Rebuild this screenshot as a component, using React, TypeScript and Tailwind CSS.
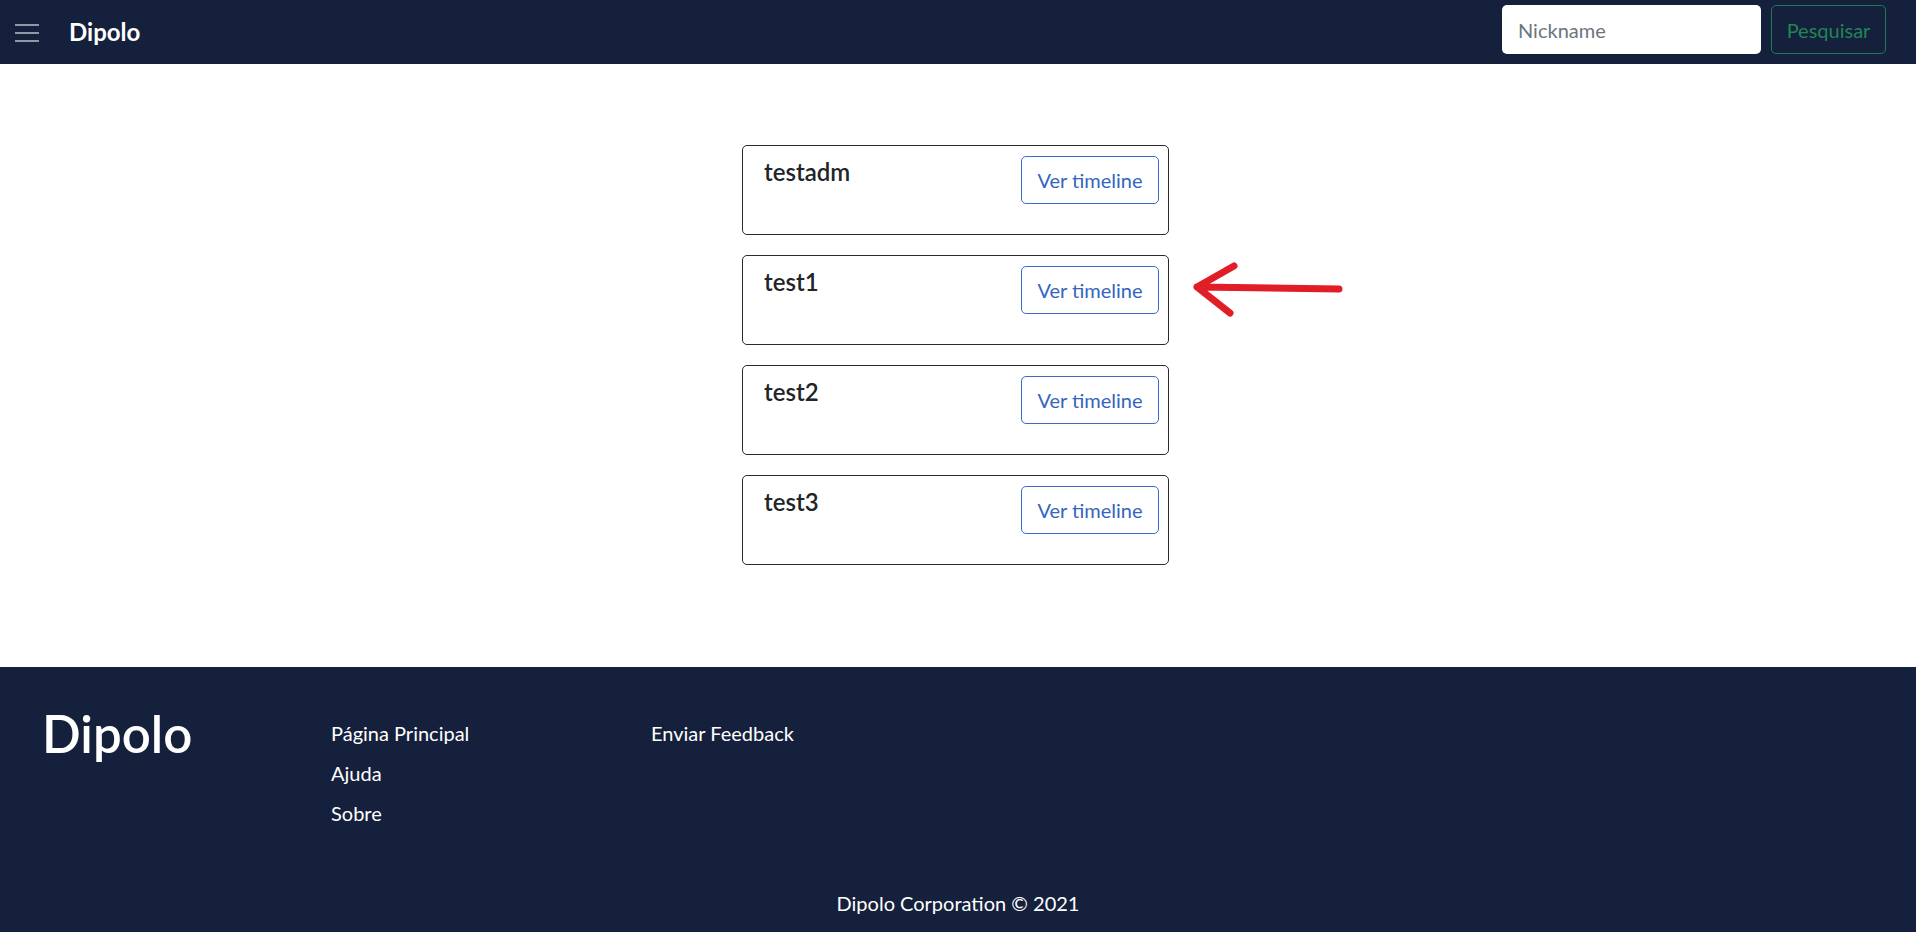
import React from "react";

const users = ["testadm", "test1", "test2", "test3"];

function Card({ name, arrow }: { name: string; arrow?: boolean }) {
  return (
    <div className="relative w-[427px] h-[90px] border border-[#2a2a2a] rounded-[5px] pl-[21px] pr-[9px] pt-[10px] flex justify-between items-start">
      <div className="text-[24px] leading-[1.2] font-semibold text-[#212529] mt-[2px]">{name}</div>
      <button className="h-[48px] w-[138px] border border-[#3a6bc5] rounded-[5px] text-[20px] text-[#3565bf] bg-white">
        Ver timeline
      </button>
      {arrow && (
        <svg
          className="absolute left-[448px] top-[3px]"
          width="155"
          height="60"
          viewBox="0 0 155 60"
          fill="none"
        >
          <path
            d="M43 7 L6 28 L39 54 M6 28 L148 30"
            stroke="#e11d27"
            strokeWidth="7"
            strokeLinecap="round"
            strokeLinejoin="round"
          />
        </svg>
      )}
    </div>
  );
}

export default function App() {
  return (
    <div className="font-['Lato','Open_Sans',sans-serif] w-[1916px] bg-white">
      <header className="h-[64px] bg-[#15203c] flex items-start justify-between pl-[15px] pr-[30px]">
        <div className="flex items-center h-[64px]">
          <svg width="24" height="20" viewBox="0 0 24 20" className="mt-[1px]">
            <path d="M0 2 H24 M0 10 H24 M0 18 H24" stroke="#9097a6" strokeWidth="2" />
          </svg>
          <span className="ml-[30px] text-white text-[24px] font-bold">Dipolo</span>
        </div>
        <div className="flex items-center gap-[10px] pt-[5px]">
          <input
            placeholder="Nickname"
            className="w-[259px] h-[49px] rounded-[5px] bg-white px-[16px] text-[20px] text-[#212529] placeholder:text-[#6c757d] outline-none"
          />
          <button className="w-[115px] h-[49px] rounded-[5px] border border-[#1d7a52] text-[#218556] text-[20px]">
            Pesquisar
          </button>
        </div>
      </header>
      <main className="h-[603px] flex flex-col items-center pt-[81px] gap-[20px] pr-[5px]">
        {users.map((u, i) => (
          <Card key={u} name={u} arrow={i === 1} />
        ))}
      </main>
      <footer className="h-[265px] bg-[#15203c] text-white flex flex-col justify-between">
        <div className="flex pt-[36px]">
          <div className="pl-[42px] w-[331px] text-[51px] leading-[1.2] font-semibold">Dipolo</div>
          <div className="w-[320px] mt-[10px] flex flex-col text-[20px] leading-[40px]">
            <span>Página Principal</span>
            <span>Ajuda</span>
            <span>Sobre</span>
          </div>
          <div className="mt-[10px] text-[20px] leading-[40px]">Enviar Feedback</div>
        </div>
        <div className="text-center text-[20px] leading-[30px] pb-[14px]">Dipolo Corporation © 2021</div>
      </footer>
    </div>
  );
}
